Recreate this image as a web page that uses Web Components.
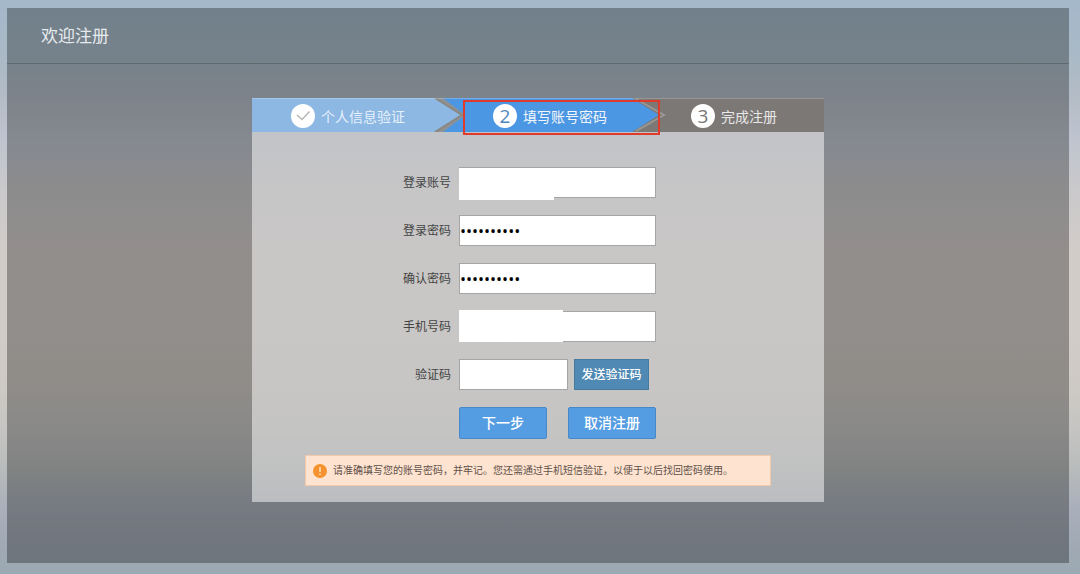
<!DOCTYPE html>
<html lang="zh-CN">
<head>
<meta charset="utf-8">
<meta name="viewport" content="width=device-width, initial-scale=1">
<title>欢迎注册</title>
<style>
  html, body { margin: 0; min-height: 100%; }
  body { font-family: "Noto Sans CJK SC", "Liberation Sans", sans-serif; color: #444; }
</style>
</head>
<body>
<register-page heading="欢迎注册">
  <register-card>
    <step-bar slot="steps">
      <step-item state="done">个人信息验证</step-item>
      <step-item state="current" number="2">填写账号密码</step-item>
      <step-item number="3">完成注册</step-item>
    </step-bar>
    <form-field label="登录账号" name="account" type="text" mask="account"></form-field>
    <form-field label="登录密码" name="password" type="password" value="abcdefghij"></form-field>
    <form-field label="确认密码" name="confirm" type="password" value="abcdefghij"></form-field>
    <form-field label="手机号码" name="phone" type="tel" mask="phone"></form-field>
    <form-field label="验证码" name="code" type="text" short>
      <action-button slot="after" kind="code">发送验证码</action-button>
    </form-field>
    <action-row slot="actions">
      <action-button>下一步</action-button>
      <action-button>取消注册</action-button>
    </action-row>
    <notice-bar slot="notice">请准确填写您的账号密码，并牢记。您还需通过手机短信验证，以便于以后找回密码使用。</notice-bar>
  </register-card>
</register-page>

<script>
class Base extends HTMLElement {
  connectedCallback() {
    if (this.shadowRoot) return;
    this.attachShadow({ mode: "open" }).innerHTML = this.render();
  }
  attr(name) { return this.getAttribute(name) || ""; }
}

customElements.define("register-page", class extends Base {
  render() {
    return `
    <style>
      :host { display: flex; box-sizing: border-box; min-height: 100vh; padding: 8px 11px 11px 7px;
        background: linear-gradient(#a4b7ca 0%, #abbac6 11%, #b4bcc6 17%, #bec4cf 24%, #cac9cb 33%, #d2ccc9 44%,
          #d1ccc7 58%, #cdc9c4 68%, #c6c5c3 74%, #b8bbbb 82%, #aab0bb 88%, #a0a9b4 95%, #9ba9b2 100%); }
      .panel { flex: 1; background: rgba(0, 0, 0, .3); }
      header { display: flex; align-items: center; box-sizing: border-box; height: 56px; padding: 0 34px 2px;
        background: rgba(110, 135, 140, .14); border-bottom: 1px solid #5f696f; }
      h1 { margin: 0; font-size: 17px; line-height: 24px; font-weight: 400; color: #e6eaee; }
      main { display: flex; justify-content: center; padding: 34px 16px 16px; }
    </style>
    <div class="panel">
      <header><h1>${this.attr("heading")}</h1></header>
      <main><slot></slot></main>
    </div>`;
  }
});

customElements.define("register-card", class extends Base {
  render() {
    return `
    <style>
      :host { display: block; box-sizing: border-box; width: 100%; max-width: 572px; padding-bottom: 16px;
        background: rgba(255, 255, 255, .5); }
      form { display: flex; flex-direction: column; gap: 17px; margin: 0; padding: 35px 0 16px; }
    </style>
    <slot name="steps"></slot>
    <form><slot></slot><slot name="actions"></slot></form>
    <slot name="notice"></slot>`;
  }
});

customElements.define("step-bar", class extends Base {
  render() {
    return `
    <style>
      :host { display: grid; grid-template-columns: 192px 202px 178px; position: relative; height: 34px;
        background: #7c7875; }
      svg { position: absolute; inset: 0; width: 100%; height: 100%; }
      .focus { position: absolute; left: 211px; top: 2px; box-sizing: border-box; width: 197px; height: 35px;
        border: 2px solid #e03a2c; }
    </style>
    <svg viewBox="0 0 572 34" preserveAspectRatio="none" aria-hidden="true">
      <path d="M190 0H380L407 17L380 34H190L211 17Z" fill="#4b97e3"/>
      <path d="M0 0H183L209 17L183 34H0Z" fill="#8cb8e3"/>
      <path d="M183 0H191L213 17L191 34H183L209 17Z" fill="#8e9295"/>
      <path d="M183 0L210 17L183 34" fill="none" stroke="#8b8783" stroke-width="2"/>
      <path d="M384 1L412 17L384 33" fill="none" stroke="#9a9895" stroke-width="2"/>
      <path d="M0 .5H572" stroke="#fff" stroke-opacity=".22"/>
    </svg>
    <slot></slot>
    <div class="focus"></div>`;
  }
});

customElements.define("step-item", class extends Base {
  render() {
    const mark = this.attr("state") === "done"
      ? `<svg viewBox="0 0 24 24" aria-hidden="true"><path d="M6 11L11 15.5L18.5 7.5" fill="none" stroke="#b9b7b4" stroke-width="1.5"/></svg>`
      : this.attr("number");
    return `
    <style>
      :host { position: relative; display: flex; align-items: center; gap: 6px; padding: 2px 0 0 39px;
        font-size: 14px; line-height: 20px; color: #e6f0fa; }
      :host([number="2"]) { padding-left: 49px; color: #f2f6fa; }
      :host([number="3"]) { padding-left: 45px; color: #e8e8e8; }
      .dot { width: 24px; height: 24px; border-radius: 50%; background: #fff; text-align: center;
        font: 19px/24px "Open Sans", sans-serif; color: #5187bd; }
      :host([number="3"]) .dot { color: #777; }
      svg { display: block; width: 24px; height: 24px; }
    </style>
    <span class="dot">${mark}</span><span><slot></slot></span>`;
  }
});

customElements.define("form-field", class extends Base {
  render() {
    const n = this.attr("name");
    return `
    <style>
      :host { display: grid; grid-template-columns: 199px 197px; column-gap: 8px; align-items: center; }
      label { padding-bottom: 2px; text-align: right; font-size: 12px; line-height: 18px; color: #444; }
      .control { position: relative; display: flex; gap: 6px; }
      input { flex: 1; min-width: 0; box-sizing: border-box; height: 31px; margin: 0; padding: 0 1px;
        border: 1px solid #a5a5a5; border-radius: 0; background: #fff; color: #000; outline: 0;
        font: 12px "Liberation Sans", sans-serif; }
      input[type="password"] { padding: 0; font: 16px "Open Sans", sans-serif; }
      :host([short]) input { flex: 0 0 109px; }
      .mask { position: absolute; left: 0; background: #fff; }
      .account { top: 1px; width: 95px; height: 32px; }
      .phone { top: -1px; width: 104px; height: 32px; }
    </style>
    <label for="${n}">${this.attr("label")}</label>
    <div class="control">
      <input id="${n}" name="${n}" type="${this.attr("type")}" value="${this.attr("value")}" autocomplete="off">
      ${this.attr("mask") ? `<span class="mask ${this.attr("mask")}"></span>` : ""}
      <slot name="after"></slot>
    </div>`;
  }
});

customElements.define("action-row", class extends Base {
  render() {
    return `
    <style>
      :host { display: flex; gap: 21px; padding-left: 207px; }
    </style>
    <slot></slot>`;
  }
});

customElements.define("action-button", class extends Base {
  render() {
    return `
    <style>
      :host { display: block; }
      button { display: block; box-sizing: border-box; width: 88px; height: 32px; margin: 0; padding: 0 0 2px;
        border: 1px solid #4788c8; border-radius: 2px; background: #559de2; color: #fff;
        font-family: inherit; font-size: 14px; line-height: 20px; font-weight: 500; cursor: pointer; }
      :host([kind="code"]) button { width: 75px; height: 31px; border-color: #477a9f; border-radius: 0;
        background: #508ab4; font-size: 12px; line-height: 18px; }
    </style>
    <button type="button"><slot></slot></button>`;
  }
});

customElements.define("notice-bar", class extends Base {
  render() {
    return `
    <style>
      :host { display: flex; align-items: center; gap: 6px; box-sizing: border-box; min-height: 31px;
        margin: 0 53px; padding: 0 7px; background: #fee4d0; border: 1px solid #f3c9aa;
        font-size: 10px; line-height: 16px; color: #5e5049; }
      svg { flex: none; width: 14px; height: 14px; }
      span { padding-bottom: 2px; }
    </style>
    <svg viewBox="0 0 14 14" aria-hidden="true">
      <circle cx="7" cy="7" r="7" fill="#f3922e"/>
      <path d="M7 3V8M7 9.5V11" stroke="#ffe2b8" stroke-width="1.5"/>
    </svg>
    <span><slot></slot></span>`;
  }
});
</script>
</body>
</html>
